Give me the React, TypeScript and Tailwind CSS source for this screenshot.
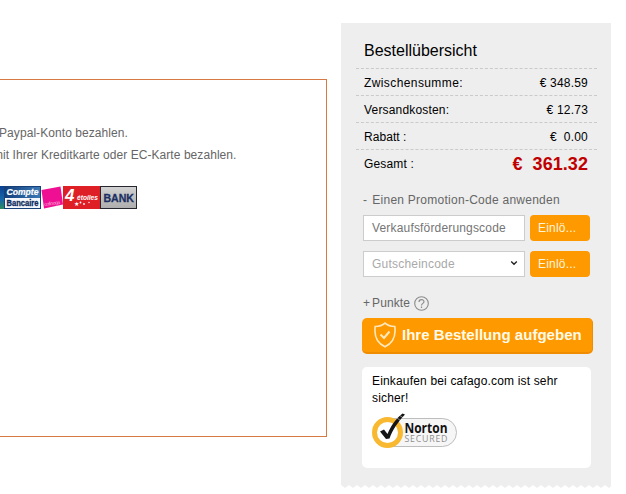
import type { ReactNode } from "react";

const totals = [
  { label: "Zwischensumme:", value: "€ 348.59", labelCls: "tracking-[0.4px]" },
  { label: "Versandkosten:", value: "€ 12.73", labelCls: "tracking-[0.18px]" },
  { label: "Rabatt :", value: "€  0.00", labelCls: "tracking-[0.05px]" },
];

function DashedRow({ children }: { children: ReactNode }) {
  return (
    <div className="h-[27px] border-t border-dashed border-[#cacaca] pl-2 pr-[9px] pt-[2px] flex items-center justify-between whitespace-pre">
      {children}
    </div>
  );
}

function RedeemButton() {
  return (
    <button className="w-[60px] h-[26px] rounded-[4px] bg-[#ff9900] text-left pl-2 text-[#fff6dc] text-[12px] tracking-[0.2px]">
      Einlö...
    </button>
  );
}

function PaymentLogos() {
  return (
    <svg width="137" height="23" viewBox="0 0 137 23" className="block" fontFamily="'Liberation Sans', Arial, sans-serif">
      <defs>
        <linearGradient id="strip" x1="0" y1="0" x2="0" y2="1">
          <stop offset="0" stopColor="#0a3f90" />
          <stop offset="0.6" stopColor="#1668a8" />
          <stop offset="1" stopColor="#2b8b5c" />
        </linearGradient>
        <linearGradient id="compte" x1="0" y1="0" x2="1" y2="0">
          <stop offset="0" stopColor="#123f7c" />
          <stop offset="1" stopColor="#3a78b4" />
        </linearGradient>
        <linearGradient id="bank" x1="0" y1="0" x2="0" y2="1">
          <stop offset="0" stopColor="#d2d2d2" />
          <stop offset="1" stopColor="#adadad" />
        </linearGradient>
      </defs>
      <rect x="0" y="0" width="4" height="23" fill="url(#strip)" />
      <rect x="4" y="0" width="37" height="23" fill="#173f78" />
      <rect x="5" y="1" width="35" height="11" fill="url(#compte)" />
      <rect x="5" y="12" width="35" height="10" fill="#f4f7fb" />
      <text x="6.5" y="9" fontSize="9" fontWeight="bold" fontStyle="italic" fill="#fff" stroke="#fff" strokeWidth="0.2" textLength="32" lengthAdjust="spacingAndGlyphs">Compte</text>
      <text x="6.5" y="19.8" fontSize="8.5" fontWeight="bold" fill="#0e2b5c" stroke="#0e2b5c" strokeWidth="0.3" textLength="32" lengthAdjust="spacingAndGlyphs">Bancaire</text>
      <path d="M41.5 4 L60.5 0.5 L63 18.5 L44 22.5 Z" fill="#ee0f92" />
      <text x="44.5" y="20" fontSize="5" fill="#ffa6d6" textLength="16" transform="rotate(-8 44.5 20)">cofinoga</text>
      <rect x="63" y="0" width="37" height="23" fill="#df1f26" />
      <text x="65" y="15" fontSize="17" fontWeight="bold" fontStyle="italic" fill="#fff">4</text>
      <text x="77" y="13.5" fontSize="7.5" fontWeight="bold" fontStyle="italic" fill="#fff" textLength="21" lengthAdjust="spacingAndGlyphs">étoiles</text>
      <text x="74" y="20" fontSize="6" fill="#fff">★</text>
      <circle cx="80.5" cy="16.5" r="0.9" fill="#fff" />
      <circle cx="84" cy="18" r="0.9" fill="#fff" />
      <circle cx="89" cy="16.5" r="0.7" fill="#fff" />
      <rect x="100.5" y="0.5" width="36" height="22" fill="url(#bank)" stroke="#26262e" />
      <text x="103.5" y="15.8" fontSize="11.5" fontWeight="bold" fill="#1b2f63" stroke="#1b2f63" strokeWidth="0.3" textLength="30.5" lengthAdjust="spacingAndGlyphs">BANK</text>
    </svg>
  );
}

function NortonSeal() {
  return (
    <svg width="86" height="36" viewBox="0 0 86 36" className="block" fontFamily="'Open Sans', 'Liberation Sans', sans-serif">
      <rect x="8" y="5.5" width="76.5" height="28" rx="14" fill="#f6f6f6" stroke="#bdbdbd" />
      <circle cx="15.5" cy="19.5" r="13" fill="#fff" stroke="#f8b830" strokeWidth="5" />
      <path d="M8 18.5 L12 16.5 L15.5 21 C19 13 23 6.5 30.5 0.5 L33 1.5 C26 9 21 16 17.5 25.5 L14 26 Z" fill="#151515" />
      <path d="M24.5 4.5 L29 8 M27 2 L31.5 5" stroke="#fff" strokeWidth="0.5" />
      <text x="32.5" y="19.5" fontSize="13.5" fontWeight="bold" fill="#111" textLength="43" lengthAdjust="spacingAndGlyphs">Norton</text>
      <text x="32.5" y="29" fontSize="8.8" fill="#8f8f8f" textLength="43">SECURED</text>
    </svg>
  );
}

export default function App() {
  return (
    <div className="w-[626px] h-[494px] overflow-hidden bg-white flex items-start font-['Liberation_Sans',Arial,sans-serif] text-[12px] text-black">
      <section className="mt-[79px] w-[327px] h-[358px] border border-l-0 border-[#d67a43] text-[#666] whitespace-nowrap">
        <p className="mt-[44px] h-[18px] leading-[18px] -ml-px tracking-[0.07px]">Paypal-Konto bezahlen.</p>
        <p className="mt-1 h-[18px] leading-[18px] -ml-[7px] tracking-[0.06px]">mit Ihrer Kreditkarte oder EC-Karte bezahlen.</p>
        <div className="mt-[22px]">
          <PaymentLogos />
        </div>
      </section>

      <aside className="mt-[23px] ml-[14px] w-[270px]">
        <div className="h-[461px] bg-[#eeeeee]">
          <h1 className="pl-[23px] pt-[18px] h-[45px] text-[16px] leading-[20px]">Bestellübersicht</h1>
          <div className="ml-[15px] w-[241px]">
            {totals.map((t) => (
              <DashedRow key={t.label}>
                <span className={t.labelCls}>{t.label}</span>
                <span className="tracking-[0.2px]">{t.value}</span>
              </DashedRow>
            ))}
            <DashedRow>
              <span className="tracking-[0.15px]">Gesamt :</span>
              <span className="text-[18px] font-bold text-[#c00000] tracking-[0.06px]">€  361.32</span>
            </DashedRow>
          </div>

          <div className="ml-[22px] w-[231px]">
            <div className="mt-[15px] h-[18px] leading-[18px] text-[#666] tracking-[0.26px] flex gap-[5px]">
              <span>-</span>
              <span>Einen Promotion-Code anwenden</span>
            </div>
            <div className="mt-[6px] flex gap-[5px]">
              <div className="w-[162px] h-[26px] bg-white border border-[#ccc] pl-2 flex items-center text-[#757575] tracking-[0.17px]">
                Verkaufsförderungscode
              </div>
              <RedeemButton />
            </div>
            <div className="mt-[10px] flex gap-[5px]">
              <div className="w-[162px] h-[26px] bg-white border border-[#ccc] pl-2 pr-[6px] flex items-center justify-between text-[#a9a9a9] tracking-[0.22px]">
                Gutscheincode
                <svg width="8" height="8" viewBox="0 0 8 8" fill="none" stroke="#222" strokeWidth="1.4">
                  <path d="M1.2 1.4 L4 4.2 L6.8 1.4" />
                </svg>
              </div>
              <RedeemButton />
            </div>
            <div className="mt-[17px] h-[18px] flex items-center gap-[2px] text-[#666] tracking-[0.1px]">
              <span>+</span>
              <span>Punkte</span>
              <svg width="15" height="15" viewBox="0 0 15 15" fill="none" stroke="#8c8c8c" className="ml-[2px]">
                <circle cx="7.5" cy="7.5" r="6.8" strokeWidth="1.1" />
                <path d="M5 6 C5 2.8 10 2.8 10 5.8 C10 7.5 7.5 7.3 7.5 9.5 M7.5 10.6 V12" strokeWidth="1.2" />
              </svg>
            </div>
          </div>

          <button className="ml-[21px] mt-[6px] w-[231px] h-[36px] rounded-[5px] bg-[#ff9900] border-b-2 border-r border-[#f08c00] flex items-center pl-[11px] text-[15px] font-bold text-[#fffbe8] tracking-[0.02px] whitespace-nowrap">
            <svg width="24" height="26" viewBox="0 0 24 26" fill="none" stroke="#ffe9bd" strokeWidth="1.6" className="mr-[5px]">
              <path d="M12 1.2 C9.5 3.5 6 4.5 2.2 4.5 C1.2 12 2 20 12 24.8 C22 20 22.8 12 21.8 4.5 C18 4.5 14.5 3.5 12 1.2 Z" />
              <path d="M7.5 12.5 L11 16 L16.5 9.5" strokeWidth="2" />
            </svg>
            Ihre Bestellung aufgeben
          </button>

          <div className="ml-[21px] mt-[13px] w-[229px] h-[101px] rounded-[5px] bg-white pl-[10px] pt-[6px]">
            <p className="leading-[17px] tracking-[0.17px]">
              Einkaufen bei cafago.com ist sehr
              <br />
              sicher!
            </p>
            <div className="mt-[6px]">
              <NortonSeal />
            </div>
          </div>
        </div>
        <svg width="270" height="4" className="block">
          <defs>
            <pattern id="teeth" width="8" height="4" patternUnits="userSpaceOnUse">
              <path d="M0 0 H8 V1 L4 4 L0 1 Z" fill="#eee" />
            </pattern>
          </defs>
          <rect width="270" height="4" fill="url(#teeth)" />
        </svg>
      </aside>
    </div>
  );
}
